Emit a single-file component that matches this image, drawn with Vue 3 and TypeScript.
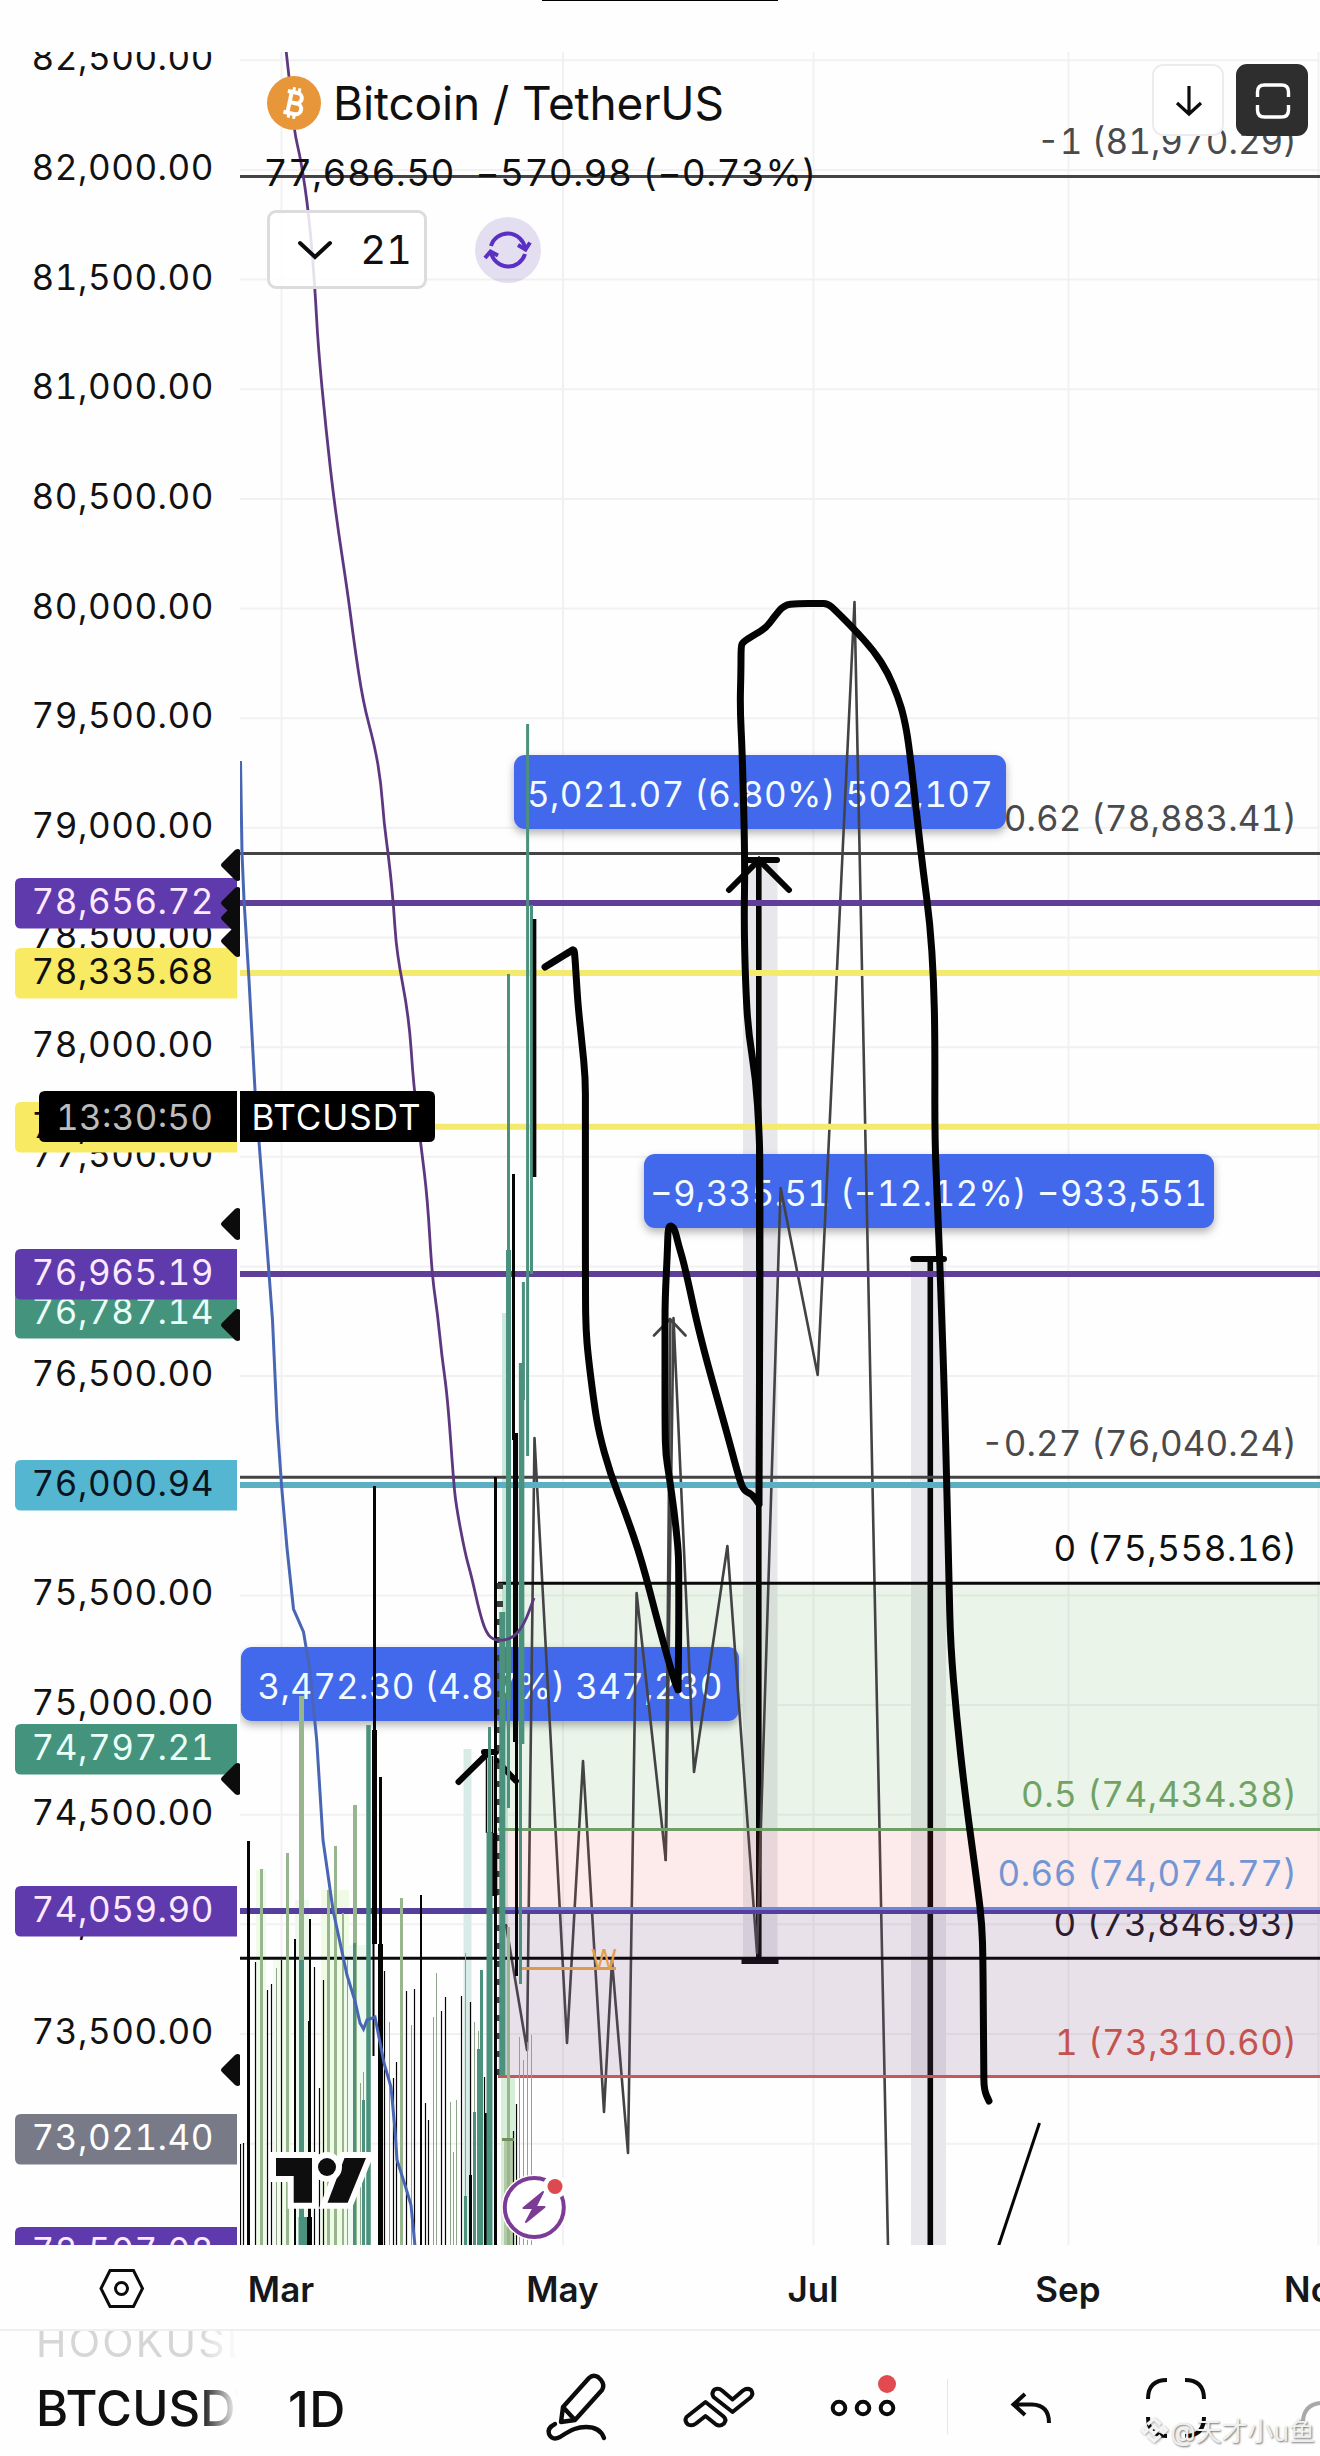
<script setup lang="ts">
interface Tag { y: number; text: string; fill: string; color: string }
interface Level { y: number; label: string; x: number; color: string }
// [x, top, bottom, width, colour]
type Bar = [number, number, number, number, string]

const BOTTOM = 2245
const STEP = 109.65
const K = '#050505'
const G = '#98b68e'
const T = '#4c917d'
const S = '#8fa58b'

const ticks = Array.from({ length: 20 }, (_, i) => ({
  y: 60.3 + i * STEP,
  text: (82500 - i * 500).toLocaleString('en-US') + '.00',
}))
const months = [
  { x: 281, text: 'Mar' },
  { x: 562.5, text: 'May' },
  { x: 813, text: 'Jul' },
  { x: 1068, text: 'Sep' },
  { x: 1318, text: 'Nov' },
]

const tags: Tag[] = [
  { y: 878, text: '78,656.72', fill: '#5e3aad', color: '#fde9ff' },
  { y: 948, text: '78,335.68', fill: '#f8ea62', color: '#101010' },
  { y: 1102, text: '77,638.00', fill: '#f8ea62', color: '#101010' },
  { y: 1288, text: '76,787.14', fill: '#43937d', color: '#eafff8' },
  { y: 1249, text: '76,965.19', fill: '#5e3aad', color: '#fde9ff' },
  { y: 1460, text: '76,000.94', fill: '#54b6d0', color: '#0a1420' },
  { y: 1724, text: '74,797.21', fill: '#43937d', color: '#eafff8' },
  { y: 1886, text: '74,059.90', fill: '#5e3aad', color: '#fde9ff' },
  { y: 2114, text: '73,021.40', fill: '#797a87', color: '#ffffff' },
  { y: 2227, text: '72,507.08', fill: '#5e3aad', color: '#fde9ff' },
]
const markers = [865, 903, 918, 941, 1224, 1325, 1779, 2070]

const hlines = [
  { y: 176.5, w: 3, c: '#444446' },
  { y: 853.5, w: 3, c: '#444446' },
  { y: 903, w: 6, c: '#5f3f98' },
  { y: 973, w: 6, c: '#f4ea6e' },
  { y: 1126.7, w: 6, c: '#f4ea6e' },
  { y: 1274, w: 6, c: '#5f3f98' },
  { y: 1477.3, w: 3, c: '#444446' },
  { y: 1485, w: 6, c: '#5aafc3' },
  { y: 1911, w: 6, c: '#54409c' },
  { y: 1958.3, w: 3, c: '#0c0c0e' },
]

const outerLevels: Level[] = [
  { y: 153.5, label: '-1 (81,970.29)', x: 1037, color: '#4a4a4c' },
  { y: 831, label: '-0.62 (78,883.41)', x: 981, color: '#4a4a4c' },
  { y: 1455.5, label: '-0.27 (76,040.24)', x: 981, color: '#4a4a4c' },
  { y: 1561, label: '0 (75,558.16)', x: 1053.5, color: '#101010' },
  { y: 1936, label: '0 (73,846.93)', x: 1053.5, color: '#1c141e' },
]
const innerLevels: Level[] = [
  { y: 1807, label: '0.5 (74,434.38)', x: 1021, color: '#6fa365' },
  { y: 1886, label: '0.66 (74,074.77)', x: 997.5, color: '#7296d4' },
  { y: 2054.5, label: '1 (73,310.60)', x: 1055, color: '#c4524f' },
]

const callouts = [
  { x: 514, y: 755, w: 492, tx: 527, tw: 466, text: '5,021.07 (6.80%) 502,107' },
  { x: 644, y: 1154, w: 570, tx: 650, tw: 557, text: '−9,335.51 (−12.12%) −933,551' },
  { x: 241, y: 1647, w: 498, tx: 257.5, tw: 465, text: '3,472.30 (4.87%) 347,230' },
]

const shades: Bar[] = [
  [261, 1870, BOTTOM, 10, '#f0fae8'],
  [282, 1960, BOTTOM, 18, '#f3fbec'],
  [302, 1900, BOTTOM, 14, '#eef9ee'],
  [335, 1890, BOTTOM, 28, '#effbe4'],
  [358, 1945, BOTTOM, 26, '#eefaf0'],
  [467.5, 1749, BOTTOM, 8, '#d8ebe7'],
  [505, 1313, 2075, 6, '#cfe9e2'],
  [508, 2075, BOTTOM, 14, '#d6efd8'],
  [509, 2140, BOTTOM, 10, '#b3c9a6'],
]

const bars: Bar[] = [
  [240.5, 2144, BOTTOM, 1.2, K], [243.5, 2143, BOTTOM, 1.2, K],
  [248.5, 1841, BOTTOM, 3, K], [255.5, 1962, BOTTOM, 1.2, K],
  [261.5, 1869, BOTTOM, 3, G], [267.5, 1990, BOTTOM, 1.2, K],
  [271.5, 1984, BOTTOM, 1.2, K], [276.5, 1968, BOTTOM, 1, S],
  [281.5, 1960, BOTTOM, 1.2, K], [287.5, 1853, BOTTOM, 3, G],
  [295, 1939, BOTTOM, 2, K], [301.5, 1927, BOTTOM, 5, T],
  [301.5, 1696, 1960, 5, G], [303, 2217, BOTTOM, 9, T],
  [310, 1919, BOTTOM, 2, K], [309.5, 2021, BOTTOM, 3, K],
  [309.5, 2217, BOTTOM, 5, K], [314.5, 1967, BOTTOM, 1.2, K],
  [319.5, 2088, BOTTOM, 1.2, K], [323.5, 1980, BOTTOM, 1.2, K],
  [328.5, 1890, BOTTOM, 3, G], [335.5, 1846, BOTTOM, 3, G],
  [343, 1913, BOTTOM, 2, G], [347.5, 1960, BOTTOM, 1, S],
  [355, 1805, BOTTOM, 4, G], [354.5, 1943, BOTTOM, 3, T],
  [360.5, 2083, BOTTOM, 1, S], [363.5, 2072, BOTTOM, 1, S],
  [363.5, 2100, BOTTOM, 3, T], [368.5, 1725, BOTTOM, 4.5, T],
  [374.5, 1486, 1735, 3, K], [374.5, 1730, 1944, 5, K],
  [373.5, 1940, 2056, 2, K], [380.5, 1777, 1945, 3, K],
  [380.5, 1944, BOTTOM, 5, K], [384.5, 1971, BOTTOM, 1.2, K],
  [389.5, 2022, BOTTOM, 1, S], [393.5, 2078, BOTTOM, 1.2, K],
  [396.5, 2062, BOTTOM, 1.2, K], [401.5, 1898, BOTTOM, 3, G],
  [406.5, 1991, BOTTOM, 1.2, K], [411.5, 2025, BOTTOM, 1, S],
  [414.5, 1989, BOTTOM, 1.2, K], [421, 1895, BOTTOM, 2, K],
  [425.5, 2103, BOTTOM, 1.2, K], [428.5, 2120, BOTTOM, 1.2, K],
  [433.5, 2017, BOTTOM, 1, S], [436.5, 1973, BOTTOM, 1, S],
  [441.5, 2011, BOTTOM, 1.2, K], [445.5, 1997, BOTTOM, 1.2, K],
  [450.5, 2102, BOTTOM, 1, S], [453.5, 2152, BOTTOM, 1, S],
  [456.5, 2100, BOTTOM, 1, S], [461.5, 1996, BOTTOM, 1.2, K],
  [465.5, 1953, BOTTOM, 1, S], [465.5, 2196, BOTTOM, 3, T],
  [470.5, 2002, BOTTOM, 1.2, K], [470.5, 2175, BOTTOM, 3, K],
  [474.5, 2022, BOTTOM, 1, S], [474.5, 2112, BOTTOM, 3, T],
  [478.5, 2031, BOTTOM, 1, S], [478.5, 2049, BOTTOM, 3, T],
  [481.5, 1970, BOTTOM, 3, T], [484.5, 2077, BOTTOM, 1.2, K],
  [485.5, 2113, BOTTOM, 3, K], [486.5, 1756, 1833, 1.5, K],
  [489.5, 1727, BOTTOM, 3, T], [489.5, 1832, BOTTOM, 6, T],
  [495.5, 1477, BOTTOM, 3, K], [494.8, 1833, 1896, 5, K],
  [492.5, 1756, 1833, 1.5, K],
  [502.3, 1612, 2075, 6, T], [508.5, 974, 1808, 3, T],
  [508.5, 1250, 1700, 5, T], [508.5, 1927, BOTTOM, 3, G],
  [513.5, 1174, 1440, 3, K], [515.5, 1433, 1742, 5, K],
  [516.5, 1700, 1976, 3, K], [523.4, 1282, 1400, 3, T],
  [521.6, 1363, 1744, 5.5, T], [520.5, 1740, 1984, 3, T],
  [527.6, 724, 1456, 3, T], [531.5, 905, 1274, 3, T],
  [534.6, 919, 1177, 3.5, K],
  [513.5, 2131, BOTTOM, 1.2, K], [516.5, 2104, BOTTOM, 1.2, K],
  [519.5, 2037, BOTTOM, 1, S], [523.5, 2060, BOTTOM, 1, S],
  [527.5, 2042, BOTTOM, 1, S], [531.5, 2035, BOTTOM, 1, S],
]

// freehand strokes are rounded through the midpoints of their samples
function smooth(points: string): string {
  const p = points.split(' ').map(s => s.split(',').map(Number))
  let d = `M${p[0][0]},${p[0][1]}`
  for (let i = 1; i < p.length - 1; i++) {
    const mx = (p[i][0] + p[i + 1][0]) / 2
    const my = (p[i][1] + p[i + 1][1]) / 2
    d += ` Q${p[i][0]},${p[i][1]} ${mx},${my}`
  }
  const last = p[p.length - 1]
  return d + ` L${last[0]},${last[1]}`
}

const zigzag = '506,1925 527,2050 534.5,1438 567,2043 583,1761 604,2112 612,1960 628,2153 636.6,1593 665.7,1860 673.5,1318 694,1772 727.4,1546 757,1953 780.6,1188 817.7,1375 854.5,602 888,2246'
const slowMa = smooth('286,50 289,75 294,131 301,160 309,215 315,288 318,345 326,430 335,509 348,595 354,642 363,702 375,747 381,783 384,823 389,860 393.6,905 396.5,952 409,1017 413.5,1085 421,1145 427.6,1200 432,1275 437.7,1315 441.7,1355 447.5,1397 453.5,1480 456,1505 465,1553 471.7,1577 479,1610 486,1633 495,1641 512,1639 524,1625 534,1598')
const fastMa = '240.5,761 242,853 244,900 249,980 255,1090 263.5,1200 272.5,1320 277,1420 281.5,1485 287,1548 293.5,1609 303.5,1632 306,1647 309.5,1667 316.7,1740 323,1840 333,1910 347,1975 355,2001 360,2023 363.5,2029 367,2020 375,2017 384,2063 391,2087 395,2130 397,2160 405,2185 411,2205 415,2246'
const brush = [
  '545,967 571,951 574,949 575,957 577,990 578.5,1010 582,1043 585.4,1078 585.4,1110 585.4,1300 586,1330 588,1355 594,1403 599,1433 610,1473 625.6,1513 642,1561 659,1627 674,1680 678,1690',
  '678,1690 678.8,1640 678.8,1565 678,1547 674,1510 669,1475 665.8,1455 665,1430 665,1340 665,1300 667.5,1250 668,1228 671,1225 675,1230 678,1243 685,1267 700,1337 727,1433 739,1478 744,1491 752,1494 759,1504',
  '759,1504 759.8,1400 760,1160 759,1130 756,1080 748,1030 745.4,980 744,920 745,860 742.3,753 740,708 741,670 741,646 743,642 754,635 766,628 774,617 784,605 797,603.5 819,603.5 828,603.5 836,611 853,628 874,651 888,673 898,697 904,717 909,745 916.5,813 923,870 930,923 933.7,980 935,1040 934.7,1140 937.5,1203 941,1293 945,1413 949,1580 950.5,1645 956.5,1716 964.7,1792 978,1890 982,1925 983,1960 983.7,2068 984,2090 989,2101',
].map(smooth).join(' ')
</script>

<template>
  <div class="app">
    <div class="status"><i class="island" /></div>

    <div class="chart">
      <svg class="canvas" width="1320" height="2193" viewBox="0 52 1320 2193">
        <defs>
          <clipPath id="plot"><rect x="240" y="52" width="1080" height="2193" /></clipPath>
          <filter id="lift" x="-5%" y="-20%" width="110%" height="150%">
            <feDropShadow dx="0" dy="4" stdDeviation="4" flood-color="#000" flood-opacity="0.3" />
          </filter>
        </defs>

        <g clip-path="url(#plot)">
          <g stroke="#f1f1f2" stroke-width="2">
            <line v-for="t in ticks" :key="t.y" x1="240" x2="1320" :y1="t.y" :y2="t.y" />
            <line v-for="m in months" :key="m.x" :x1="m.x + 0.5" :x2="m.x + 0.5" y1="52" y2="2245" />
          </g>

          <rect x="743" y="860" width="34.5" height="1100" fill="#e8e8ec" />
          <rect x="911" y="1259" width="35" height="986" fill="#e8e8ec" />
          <rect v-for="(b, i) in shades" :key="'s' + i" :x="b[0] - b[3] / 2" :y="b[1]" :width="b[3]" :height="b[2] - b[1]" :fill="b[4]" />
          <rect x="498" y="1583" width="822" height="246" fill="rgba(90,175,80,0.12)" />

          <text v-for="l in outerLevels" :key="l.label" class="num" :x="l.x" :y="l.y" :fill="l.color" :textLength="1297 - l.x">{{ l.label }}</text>

          <g v-for="c in callouts" :key="c.text">
            <rect :x="c.x" :y="c.y" :width="c.w" height="74" rx="11" fill="#4368ec" filter="url(#lift)" />
            <text class="num" :x="c.tx" :y="c.y + 51.5" fill="#f2fbff" :textLength="c.tw">{{ c.text }}</text>
          </g>

          <!-- measured ranges -->
          <g fill="none" stroke="#050505" stroke-width="5.6">
            <path d="M758.8,860 V1960 M930.3,1259 V2245" />
            <path d="M729,890 L759,860 L789,890 M746,860 H777 M913,1259 H944" stroke-width="6" stroke-linecap="round" />
            <path d="M741.5,1961 H778.5" stroke-width="6" />
            <path d="M458.5,1782 L488,1753 M516,1781 L497,1761 M484,1752 H496" stroke-width="6" stroke-linecap="round" />
          </g>
          <g fill="none" stroke="#434345" stroke-width="2.6" stroke-linejoin="round" stroke-linecap="round">
            <polyline :points="zigzag" />
            <path d="M665.7,1860 L670.4,1320 M654,1335.5 L670,1319 L685.5,1335.5" />
          </g>
          <path d="M1039.5,2123 L998.5,2246" stroke="#050505" stroke-width="3" />

          <rect x="498" y="1829" width="822" height="80" fill="rgba(240,70,60,0.1)" />
          <rect x="498" y="1909" width="822" height="167" fill="rgba(120,80,130,0.165)" />

          <line v-for="h in hlines" :key="h.y" x1="240" x2="1320" :y1="h.y" :y2="h.y" :stroke="h.c" :stroke-width="h.w" />
          <line x1="498" x2="1320" y1="1583.3" y2="1583.3" stroke="#0a0a0a" stroke-width="3" />
          <line x1="498" x2="1320" y1="1829.5" y2="1829.5" stroke="#6f9f66" stroke-width="3" />
          <line x1="498" x2="1320" y1="1908.5" y2="1908.5" stroke="#6f85dc" stroke-width="3" />
          <line x1="498" x2="1320" y1="2076.5" y2="2076.5" stroke="#c25a59" stroke-width="3" />
          <text v-for="l in innerLevels" :key="l.label" class="num" :x="l.x" :y="l.y" :fill="l.color" :textLength="1297 - l.x">{{ l.label }}</text>

          <line x1="500" x2="500" y1="1583" y2="2078" stroke="#33403c" stroke-width="6" stroke-dasharray="6 12" />
          <rect v-for="(b, i) in bars" :key="'b' + i" :x="b[0] - b[3] / 2" :y="b[1]" :width="b[3]" :height="b[2] - b[1]" :fill="b[4]" />
          <line x1="502" x2="514" y1="2139.5" y2="2139.5" stroke="#6f8f5c" stroke-width="3" />

          <path :d="slowMa" fill="none" stroke="#5d3780" stroke-width="2.8" />
          <polyline :points="fastMa" fill="none" stroke="#4866b4" stroke-width="3" />

          <line x1="522" x2="616" y1="1968.5" y2="1968.5" stroke="#dc9a4a" stroke-width="3" />
          <text x="591" y="1969" font-size="27" fill="#e2a04c" textLength="26" lengthAdjust="spacingAndGlyphs">W</text>

          <path :d="brush" fill="none" stroke="#030303" stroke-width="7" stroke-linecap="round" stroke-linejoin="round" />

          <!-- chart logo -->
          <g stroke="#fff" stroke-width="12" paint-order="stroke" fill="#0e0e0e">
            <path d="M276,2158 H312 V2202.7 H293.7 V2176 H276 Z" />
            <path d="M344.5,2158 H366 L347.7,2202.7 H327.5 Z" />
            <circle cx="327" cy="2167" r="9" />
          </g>
          <circle cx="534.3" cy="2207.5" r="33" fill="#fff" />
          <circle cx="534.3" cy="2207.5" r="29.5" fill="#fff" stroke="#7c3c96" stroke-width="4" />
          <path d="M543,2192 L523.5,2208 H533.5 L526,2222 L544.5,2207 H535.5 Z" fill="#7c3c96" stroke="#7c3c96" stroke-width="2" stroke-linejoin="round" />
          <circle cx="555" cy="2186.5" r="12" fill="#fff" />
          <circle cx="555" cy="2186.5" r="7.5" fill="#dc4a50" />
        </g>

        <!-- price scale -->
        <text v-for="t in ticks" :key="t.text" class="num" x="31.5" :y="t.y + 10" fill="#121212" textLength="182">{{ t.text }}</text>
        <g v-for="t in tags" :key="t.text">
          <path :d="`M237,${t.y} H21 q-6,0 -6,6 v38.6 q0,6 6,6 H237 Z`" :fill="t.fill" />
          <text class="num" x="31.5" :y="t.y + 36" :fill="t.color" textLength="182">{{ t.text }}</text>
        </g>
        <path v-for="m in markers" :key="m" :d="`M240,${m - 15} v30 q-2,2 -5,0 L222,${m + 2} q-2,-2 0,-4 L235,${m - 15} q3,-2 5,0 Z`" fill="#0c0c0c" />
        <path d="M237,1091 H45 q-6,0 -6,6 v39 q0,6 6,6 H237 Z" fill="#000" />
        <text class="num" x="56" y="1130" fill="#bcbcbc" textLength="157">13:30:50</text>
        <path d="M240,1091 H429 q6,0 6,6 v39 q0,6 -6,6 H240 Z" fill="#000" />
        <text x="251.5" y="1130" font-size="35" fill="#fff" textLength="169">BTCUSDT</text>
      </svg>

      <div class="legend">
        <div class="legend-title">
          <svg width="54" height="54" viewBox="0 0 54 54">
            <circle cx="27" cy="27" r="27" fill="#e8963a" />
            <g transform="rotate(12 27 27)" fill="none" stroke="#fff" stroke-width="4">
              <path d="M18.5,16.5 H28.5 a5,5 0 0 1 0,10.5 H22 M28.5,27 h1.5 a5.2,5.2 0 0 1 0,10.8 H18.5 M22.5,16.5 V37.8" />
              <path d="M24.3,11.5 V17 M29.8,11.5 V17 M24.3,37 V42.5 M29.8,37 V42.5" stroke-width="3" />
            </g>
          </svg>
          <span>Bitcoin / TetherUS</span>
        </div>
        <div class="legend-price">77,686.50&nbsp; −570.98 (−0.73%)</div>
        <div class="legend-row">
          <button class="count">
            <svg width="36" height="20" viewBox="0 0 36 20" fill="none" stroke="#0c0c0c" stroke-width="4" stroke-linecap="round"><path d="M3 3l15 14 15-14" /></svg>
            21
          </button>
          <span class="sync">
            <svg width="66" height="66" viewBox="0 0 66 66" fill="none" stroke="#5a2fc4" stroke-width="4">
              <path d="M16,29 A17.5,17.5 0 0 1 50,31 M50,37 A17.5,17.5 0 0 1 16,35" />
              <path d="M43,28 L50.5,32.5 L55,25.5 M10,41 L15.5,34.5 L23,38.5" />
            </svg>
          </span>
        </div>
      </div>

      <div class="actions">
        <button class="action">
          <svg width="40" height="40" viewBox="0 0 40 40" fill="none" stroke="#0c0c0c" stroke-width="3.2"><path d="M21 6v28M9 23l12 11 12-11" /></svg>
        </button>
        <button class="action dark">
          <svg width="40" height="40" viewBox="0 0 40 40" fill="none" stroke="#fff" stroke-width="3.4"><path d="M5.5 17v-5q0-7 7-7h17q7 0 7 7v5M5.5 25v5q0 7 7 7h17q7 0 7-7v-5" /></svg>
        </button>
      </div>
    </div>

    <svg class="timeline" width="1320" height="84" viewBox="0 2245 1320 84">
      <path d="M110,2270.5 H133.5 L142.5,2288.5 L133.5,2306.5 H110 L101,2288.5 Z" fill="none" stroke="#0c0c0c" stroke-width="3" />
      <circle cx="121.5" cy="2288.5" r="6" fill="none" stroke="#0c0c0c" stroke-width="3" />
      <text v-for="m in months" :key="m.text" class="month" :x="m.x" y="2302" text-anchor="middle">{{ m.text }}</text>
    </svg>

    <div class="toolbar">
      <div class="symbols">
        <div class="symbol-prev">HOOKUSDT</div>
        <div class="symbol">BTCUSDT</div>
      </div>
      <div class="interval">1D</div>
      <svg class="draw" width="72" height="126" viewBox="540 2330 72 126" fill="none" stroke="#0c0c0c" stroke-width="4.4" stroke-linejoin="round" stroke-linecap="round">
        <path d="M563,2406 L589,2377 Q593,2373 598,2376 L601,2379 Q605,2384 602,2389 L575,2419 L561,2421 Z M563,2406 L574,2418" />
        <path d="M555,2423 Q547,2427 549,2433 Q552,2440 560,2436 C572,2428 578,2426 586,2426 Q600,2426 604,2437" />
      </svg>
      <svg class="indicators" width="80" height="126" viewBox="680 2330 80 126" fill="none" stroke="#0c0c0c" stroke-width="4" stroke-linejoin="round">
        <path d="M705.5,2401 L686.5,2416 Q684,2420 688,2423.5 Q692,2425.5 696,2422.5 L705.5,2415 L716,2423.5 Q720,2426 724,2422.5 Q727,2418.5 723.5,2415.5 Z" />
        <path d="M732.5,2411 L713.5,2396 Q711,2392 714.5,2388.5 Q718.5,2386.5 722,2389.5 L732.5,2398.5 L743,2389.5 Q747,2386.5 751,2389 Q754,2393 750.5,2396.5 Z" />
      </svg>
      <svg class="more" width="80" height="126" viewBox="822 2330 80 126" fill="none" stroke="#0c0c0c" stroke-width="4">
        <circle cx="839" cy="2407" r="6.3" />
        <circle cx="863" cy="2407" r="6.3" />
        <circle cx="887" cy="2407" r="6.3" />
        <circle cx="887" cy="2383" r="9" fill="#e04a50" stroke="none" />
      </svg>
      <i class="divider" />
      <svg class="undo" width="60" height="126" viewBox="1000 2330 60 126" fill="none" stroke="#0c0c0c" stroke-width="4">
        <path d="M1025,2393 L1013.5,2403.5 L1025,2414 M1014,2403.5 H1032 Q1049,2404 1049,2422" />
      </svg>
      <svg class="fullscreen" width="184" height="126" viewBox="1136 2330 184 126" fill="none" stroke="#0c0c0c" stroke-width="4">
        <path d="M1167,2379 Q1148,2379 1148,2398 M1185,2379 Q1204,2379 1204,2398 M1148,2416 Q1148,2435 1167,2435 M1204,2416 Q1204,2435 1185,2435" />
        <path d="M1303,2420 Q1304,2404 1320,2402" stroke="#a8a8a8" />
      </svg>
      <div class="watermark">
        <svg width="28" height="30" viewBox="0 0 30 30" fill="none" stroke="#f4f4f4" stroke-width="3.5"><path d="M8 9l7-6 7 6M8 21l7 6 7-6M11 15l4-4 4 4-4 4zM2 15l3-3 3 3-3 3zM22 15l3-3 3 3-3 3z" /></svg>
        <span>@天才小u鱼</span>
      </div>
    </div>
  </div>
</template>

<style>
body { margin: 0; background: #fefefe; }
</style>

<style scoped>
.app { width: 1320px; height: 2456px; overflow: hidden; display: flex; flex-direction: column; background: #fefefe; color: #101010; font-family: Inter, 'Liberation Sans', sans-serif; }
.status { height: 52px; flex-shrink: 0; display: flex; justify-content: center; }
.island { width: 236px; height: 1px; background: #000; }
.chart { position: relative; height: 2193px; flex-shrink: 0; }
.canvas { display: block; }
.num { font-size: 35px; font-feature-settings: 'tnum'; white-space: pre; }

.legend { position: absolute; left: 265px; top: 24px; }
.legend-title { display: flex; align-items: center; gap: 12px; height: 54px; padding-left: 2px; font-size: 46px; letter-spacing: -0.15px; white-space: nowrap; }
.legend-price { margin: 21px 0 0 -1.5px; height: 44px; line-height: 44px; font-size: 37px; letter-spacing: 0.4px; white-space: nowrap; font-feature-settings: 'tnum'; }
.legend-row { display: flex; align-items: center; gap: 48px; margin: 15px 0 0 2px; }
.count { box-sizing: border-box; width: 160px; height: 79px; padding: 0 12px 0 27px; display: flex; align-items: center; justify-content: space-between; border: 3px solid #dcdcde; border-radius: 9px; background: rgba(255, 255, 255, 0.85); color: #101010; font-family: inherit; font-size: 40px; font-feature-settings: 'tnum'; }
.sync { width: 66px; height: 66px; border-radius: 50%; background: rgba(94, 58, 173, 0.16); }

.actions { position: absolute; left: 1152px; top: 12px; display: flex; gap: 12px; }
.action { box-sizing: border-box; width: 72px; height: 72px; padding: 0; display: flex; align-items: center; justify-content: center; border: 2px solid #ececee; border-radius: 11px; background: #fff; }
.action.dark { background: #2e2e2e; border-color: #2e2e2e; }

.timeline { display: block; flex-shrink: 0; }
.month { font-size: 35px; font-weight: 600; fill: #15171a; }

.toolbar { position: relative; box-sizing: border-box; height: 127px; flex-shrink: 0; display: flex; border-top: 2px solid #efeff0; }
.symbols { width: 238px; height: 125px; box-sizing: border-box; padding-left: 36px; flex-shrink: 0; overflow: hidden; white-space: nowrap; mask-image: linear-gradient(to right, #000 84%, transparent 100%); }
.symbol-prev { height: 44px; line-height: 22px; font-size: 41px; letter-spacing: 2.2px; color: #d6d6d6; }
.symbol { height: 60px; line-height: 68px; font-size: 49px; letter-spacing: 0.1px; font-weight: 500; }
.interval { width: 72px; margin-left: 50px; padding-top: 44px; line-height: 68px; font-size: 50px; letter-spacing: 0.5px; font-weight: 500; }
.draw { margin-left: 180px; }
.indicators { margin-left: 68px; }
.more { margin-left: 62px; }
.divider { width: 1px; height: 55px; margin: 48px 0 0 45px; background: #e6e6e8; }
.undo { margin-left: 52px; }
.fullscreen { margin-left: 76px; }
.watermark { position: absolute; right: 5px; bottom: 8px; display: flex; align-items: center; gap: 3px; color: #f0f0f0; font-family: Inter, 'Noto Sans CJK SC', sans-serif; font-size: 26px; white-space: nowrap; text-shadow: 1px 1px 2px rgba(0, 0, 0, 0.55); }
.watermark svg { filter: drop-shadow(1px 1px 1px rgba(0, 0, 0, 0.35)); }
.toolbar > svg { flex-shrink: 0; }
</style>
